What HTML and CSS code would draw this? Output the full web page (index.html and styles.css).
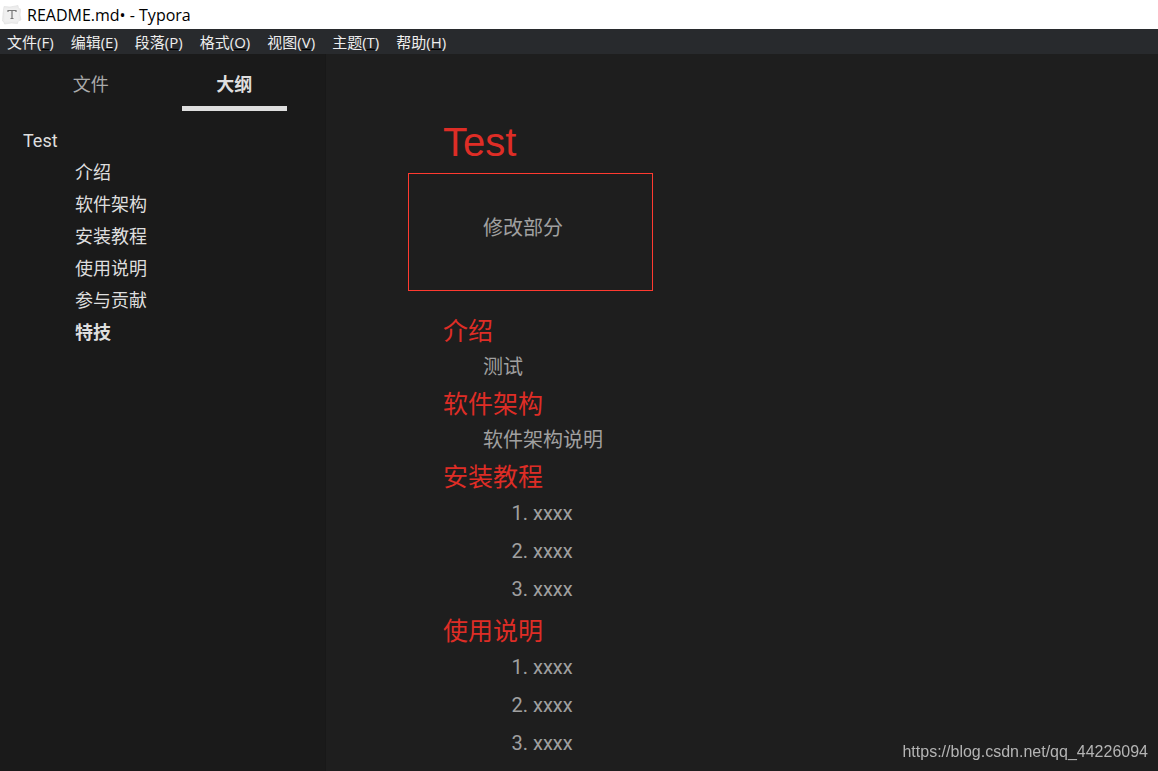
FILE: index.html
```html
<!DOCTYPE html>
<html lang="zh-CN">
<head>
<meta charset="utf-8">
<title>README.md• - Typora</title>
<link rel="stylesheet" href="styles.css">
</head>
<body>
<header class="titlebar">
  <svg class="app-icon" width="20" height="20" viewBox="0 0 20 20" aria-hidden="true">
    <path d="M2 1.5 8 2l8-1.500.5 3 2 .5-.5 6 1 5-3 1-.5 2.500-6-.5-7 1-.5-2-1.500-1 .5-7z" fill="#ececec" stroke="#dedede" stroke-width=".6"/>
    <path d="M2.500 3.500h14v13h-14z" fill="#f0f0f0"/>
    <path d="M6 7V5.500h8V7M10 5.500v8M8.500 13.500h3" fill="none" stroke="#777" stroke-width="1.200"/>
  </svg>
  <span>README.md• - Typora</span>
</header>
<nav class="menubar">
  <button class="menu">文件(<u>F</u>)</button>
  <button class="menu">编辑(<u>E</u>)</button>
  <button class="menu">段落(<u>P</u>)</button>
  <button class="menu">格式(<u>O</u>)</button>
  <button class="menu">视图(<u>V</u>)</button>
  <button class="menu">主题(<u>T</u>)</button>
  <button class="menu">帮助(<u>H</u>)</button>
</nav>
<div class="workspace">
  <aside class="sidebar">
    <div class="tabs">
      <button class="tab">文件</button>
      <button class="tab tab-active">大纲</button>
    </div>
    <nav class="outline">
      <a class="outline-root" href="#test">Test</a>
      <a href="#intro">介绍</a>
      <a href="#arch">软件架构</a>
      <a href="#install">安装教程</a>
      <a href="#usage">使用说明</a>
      <a href="#contrib">参与贡献</a>
      <a class="outline-current" href="#stunt">特技</a>
    </nav>
  </aside>
  <main class="editor">
    <h1 id="test">Test</h1>
    <p class="framed">修改部分</p>
    <h2 id="intro">介绍</h2>
    <p>测试</p>
    <h2 id="arch">软件架构</h2>
    <p>软件架构说明</p>
    <h2 id="install">安装教程</h2>
    <ol>
      <li>xxxx</li>
      <li>xxxx</li>
      <li>xxxx</li>
    </ol>
    <h2 id="usage">使用说明</h2>
    <ol>
      <li>xxxx</li>
      <li>xxxx</li>
      <li>xxxx</li>
    </ol>
  </main>
</div>
<div class="watermark">https://blog.csdn.net/qq_44226094</div>
</body>
</html>
```

FILE: styles.css
```css
* {
  box-sizing: border-box;
}

body {
  margin: 0;
  min-height: 100vh;
  display: flex;
  flex-direction: column;
  background: #1e1e1e;
  font-family: Roboto, "Noto Sans CJK SC", sans-serif;
}

button {
  border: 0;
  padding: 0;
  background: none;
  color: inherit;
  font: inherit;
}

.titlebar {
  display: flex;
  align-items: center;
  gap: 5px;
  height: 29px;
  padding: 0 2px;
  background: #fff;
  color: #000;
  font: 16px "Open Sans", "Noto Sans CJK SC", sans-serif;
}

.menubar {
  display: flex;
  gap: 17px;
  height: 25px;
  padding: 1px 7px 0;
  background: #282a2d;
  color: #eee;
  font: 15px/25px "Open Sans", "Noto Sans CJK SC", sans-serif;
}

.menu {
  white-space: nowrap;
}

.menu u {
  text-decoration-color: #000;
}

.workspace {
  flex: 1;
  display: flex;
}

.sidebar {
  flex: 0 0 326px;
  background: #1a1a1a;
  border-right: 1px solid #181818;
  color: #dedede;
  font-size: 18px;
}

.tabs {
  display: flex;
  padding: 8px 19px 0;
}

.tab {
  flex: 1;
  display: flex;
  flex-direction: column;
  align-items: center;
  height: 49px;
  padding-top: 2px;
  line-height: 42px;
  color: #aaa;
}

.tab-active {
  color: #dedede;
  font-weight: bold;
}

.tab-active::after {
  content: "";
  width: 105px;
  height: 5px;
  background: #dedede;
}

.outline {
  display: flex;
  flex-direction: column;
  padding: 14px 23px;
  line-height: 32px;
}

.outline a {
  padding-left: 52px;
  color: inherit;
  text-decoration: none;
}

.outline .outline-root {
  padding-left: 0;
}

.outline-current {
  font-weight: bold;
}

.editor {
  flex: 1;
  padding: 64px 117px 0;
  color: #a0a0a0;
  font-size: 20px;
}

.editor h1,
.editor h2 {
  margin: 0;
  color: #de2d26;
  font-family: "Liberation Sans", "Noto Sans CJK SC", sans-serif;
  font-weight: normal;
}

.editor h1 {
  margin-bottom: 7px;
  font-size: 40px;
  line-height: 48px;
}

.editor h2 {
  font-size: 25px;
  line-height: 36px;
}

.editor p {
  margin: 0;
  padding-left: 40px;
  line-height: 37px;
}

.editor .framed {
  width: 245px;
  margin: 0 0 22px -35px;
  padding: 36px 0 43px 74px;
  border: 1px solid #ff3a30;
}

.editor ol {
  display: grid;
  gap: 1px;
  margin: 0 0 5px;
  padding-left: 90px;
  line-height: 37px;
}

.watermark {
  position: fixed;
  right: 10px;
  bottom: 9px;
  color: #b4b4b4;
  font: 16px/20px "Liberation Sans", sans-serif;
}
```
